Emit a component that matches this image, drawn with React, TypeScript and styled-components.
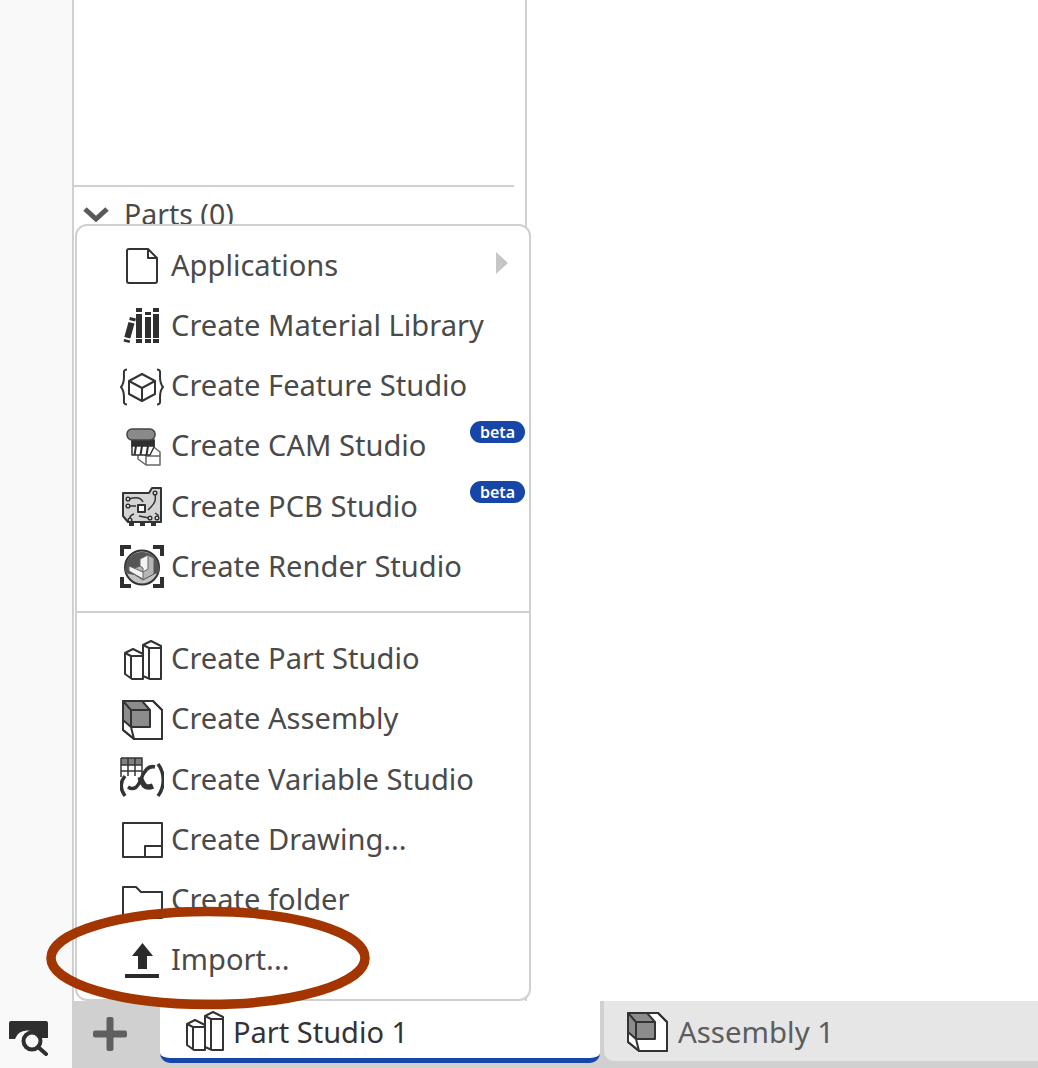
import React from "react";
import styled, { createGlobalStyle } from "styled-components";

const GlobalStyle = createGlobalStyle`
  html, body {
    margin: 0;
    padding: 0;
    background: #fff;
    font-family: "Noto Sans", "Open Sans", sans-serif;
  }
`;

const Page = styled.div`
  position: relative;
  width: 1038px;
  height: 1068px;
  display: flex;
  flex-direction: column;
  overflow: hidden;
`;

const Workspace = styled.div`
  position: relative;
  height: 1001px;
  display: flex;
`;

const Rail = styled.div`
  width: 72px;
  background: #f9f9f9;
`;

const Panel = styled.div`
  width: 451px;
  border-left: 2px solid #d0d0d0;
  border-right: 2px solid #d0d0d0;
  padding-top: 185px;
  background: #fff;
`;

const PanelRule = styled.div`
  height: 2px;
  margin-right: 11px;
  background: #d0d0d0;
`;

const PartsRow = styled.div`
  display: flex;
  align-items: center;
  gap: 15px;
  padding: 8px 0 0 9px;
  font-size: 28.5px;
  line-height: 38px;
  color: #4a4a4a;
`;

const Menu = styled.div`
  position: absolute;
  left: 75px;
  top: 224px;
  width: 456px;
  height: 777px;
  box-sizing: border-box;
  padding-top: 9px;
  background: #fff;
  border: 2px solid #d0d0d0;
  border-radius: 12px;
`;

const MenuRow = styled.div`
  position: relative;
  height: 60.25px;
  display: flex;
  align-items: center;
  padding-left: 43px;
  gap: 7px;
  font-size: 29.1px;
  color: #4a4a4a;
  white-space: nowrap;
`;

const MenuLabel = styled.span`
  margin-bottom: 1px;
`;

const MenuRule = styled.div`
  height: 2px;
  margin: 14px 0 16px;
  background: #d0d0d0;
`;

const Beta = styled.span`
  position: absolute;
  right: 4px;
  top: 5px;
  width: 55px;
  height: 22px;
  border-radius: 11px;
  background: #1546a8;
  color: #fff;
  font-size: 16px;
  font-weight: 600;
  line-height: 22px;
  text-align: center;
`;

const SubArrow = styled.span`
  position: absolute;
  right: 21px;
  top: 17px;
  width: 0;
  height: 0;
  border-left: 12px solid #c6c6c6;
  border-top: 11px solid transparent;
  border-bottom: 11px solid transparent;
`;

const TabBar = styled.div`
  flex: 1;
  display: flex;
  background: #d0d0d0;
`;

const SearchCell = styled.div`
  width: 72px;
  display: flex;
  align-items: center;
  padding: 6px 0 0 8px;
  box-sizing: border-box;
  background: #f9f9f9;
`;

const AddCell = styled.div`
  width: 88px;
  display: flex;
  align-items: center;
  justify-content: center;
  box-sizing: border-box;
  padding: 0 12px 2px 0;
`;

const Tab = styled.div<{ $active?: boolean }>`
  height: ${(p) => (p.$active ? "62px" : "60px")};
  box-sizing: border-box;
  display: flex;
  align-items: center;
  font-size: ${(p) => (p.$active ? "29px" : "29.4px")};
  white-space: nowrap;
  color: ${(p) => (p.$active ? "#333" : "#5d5d5d")};
  background: ${(p) => (p.$active ? "#fff" : "#e6e6e6")};
  width: ${(p) => (p.$active ? "440px" : "434px")};
  margin-left: ${(p) => (p.$active ? "0" : "4px")};
  padding-left: ${(p) => (p.$active ? "22px" : "21px")};
  gap: ${(p) => (p.$active ? "7px" : "9px")};
  border-bottom: ${(p) => (p.$active ? "5px solid #1546a8" : "none")};
  border-radius: ${(p) => (p.$active ? "0 0 10px 10px" : "0 0 0 10px")};
`;

const TabLabel = styled.span<{ $active?: boolean }>`
  margin-top: ${(p) => (p.$active ? "4px" : "1px")};
`;

const Glyph = styled.svg`
  flex: none;
  width: 44px;
  height: 44px;
  fill: none;
  stroke: #333;
  stroke-width: 2;
  stroke-linejoin: round;
`;

const Highlight = styled.svg`
  position: absolute;
  left: 40px;
  top: 900px;
  width: 340px;
  height: 116px;
  pointer-events: none;
`;

const DocIcon = () => (
  <Glyph viewBox="0 0 44 44">
    <path d="M9 6h19l9 9v23a2 2 0 0 1-2 2H9a2 2 0 0 1-2-2V8a2 2 0 0 1 2-2z" />
    <path d="M28 6v9h9" />
  </Glyph>
);

const LibraryIcon = () => (
  <Glyph viewBox="0 0 44 44" style={{ stroke: "none" }}>
    <g fill="#2f2f2f">
      <rect x="16" y="5" width="6" height="4" />
      <rect x="16" y="11" width="6" height="24" />
      <rect x="16" y="36" width="6" height="4" />
      <rect x="25" y="9" width="6" height="3" />
      <rect x="25" y="14" width="6" height="21" />
      <rect x="25" y="36" width="6" height="4" />
      <rect x="33" y="5" width="6" height="4" />
      <rect x="33" y="11" width="6" height="24" />
      <rect x="33" y="36" width="6" height="4" />
      <path d="M10 14l6 1.500-.8 3-6-1.500zM8.500 19l6 1.500-4.200 15-6-1.500zM4.200 36l6 1.500-.7 2.500-6-1.500z" />
    </g>
  </Glyph>
);

const FeatureIcon = () => (
  <Glyph viewBox="0 0 44 44">
    <path d="M22 10l13 7v13l-13 7-13-7V17z" />
    <path d="M9 17l13 7 13-7M22 24v13" />
    <path d="M6 5.500c-4 0-3 3-3 7s0 7-3 10.500c3 3.500 3 6.500 3 10.500s-1 7 3 7" transform="translate(1 0)" />
    <path d="M38 5.500c4 0 3 3 3 7s0 7 3 10.500c-3 3.500-3 6.500-3 10.500s1 7-3 7" transform="translate(-1 0)" />
  </Glyph>
);

const CamIcon = () => (
  <Glyph viewBox="0 0 44 44" style={{ strokeWidth: 1.5 }}>
    <path d="M30 20l10 8v13H26l-8-6v-9l6-3z" stroke="#666" fill="#fff" />
    <path d="M18 26l8 6v9M26 32h14" stroke="#666" />
    <path d="M12 16h22v7l-4 8H12z" fill="#fff" stroke="#333" />
    <path d="M12 16h22v6H12z" fill="#2f2f2f" stroke="#2f2f2f" />
    <path d="M16 22l-1.500 9M22 22l-1.500 9M28 22l-1.500 9" stroke="#2f2f2f" strokeWidth="2" />
    <rect x="7" y="5" width="28" height="11" rx="5" fill="#8a8a8a" stroke="#444" />
  </Glyph>
);

const PcbIcon = () => (
  <Glyph viewBox="0 0 44 44" style={{ strokeWidth: 1.5 }}>
    <path d="M3 9h26l3-5h9v34H8l-5-6z" fill="#d4d4d4" stroke="#333" strokeWidth="2" />
    <path d="M9 38h5v4H9zM20 38h5v4h-5zM31 38h5v4h-5z" fill="#333" stroke="none" />
    <rect x="18" y="21" width="7" height="7" fill="#fff" stroke="#333" strokeWidth="2" />
    <path d="M9 15c6-2 12-2 14 3M9 22h7M35 10c1 6 0 9-4 13l-3 3M14 30c-3 1-5 3-4 6M19 32l10 2M35 29l3 2v3" />
    <circle cx="8" cy="15" r="1.800" fill="#fff" />
    <circle cx="8" cy="22" r="1.800" fill="#fff" />
    <circle cx="35" cy="9" r="1.800" fill="#fff" />
    <circle cx="10" cy="36" r="1.800" fill="#fff" />
    <circle cx="30" cy="34" r="1.800" fill="#fff" />
    <circle cx="37" cy="34" r="1.800" fill="#fff" />
  </Glyph>
);

const RenderIcon = () => (
  <Glyph viewBox="0 0 44 44">
    <g fill="#2f2f2f" stroke="none">
      <path d="M0 1h11v4H4v7H0zM33 1h11v11h-4V5h-7zM0 33h4v7h7v4H0zM40 33h4v11H33v-4h7z" />
    </g>
    <circle cx="22" cy="23.500" r="17" fill="#c4c4c4" stroke="#333" />
    <path d="M5.500 21a17 17 0 0 1 33 0c1 3 .5 6 0 8-8 3-24 3-33 0-.5-2-.5-6 0-8z" fill="#555" stroke="none" />
    <path d="M9 27l8-4 3-1v-7l8-4 6 3v16l-11 6z" fill="#b5b5b5" stroke="#555" strokeWidth="1" />
    <path d="M9 27l14 8v-7l-14-6zM20 22l3 2v4l5-3V11l-8 4z" fill="#f3f3f3" stroke="#666" strokeWidth="1" />
  </Glyph>
);

const PartIcon = () => (
  <Glyph viewBox="0 0 44 44">
    <path d="M5 16l8-4 10 5v25H12l-7-5z" fill="#fff" />
    <path d="M5 16l6 3h12M11 19v23" />
    <path d="M23 8l8-4 10 5v33H30l-7-3z" fill="#fff" />
    <path d="M23 8l6 3h12M29 11v31" />
  </Glyph>
);

const AssemblyIcon = () => (
  <Glyph viewBox="0 0 44 44">
    <path d="M3 4h30l9 9v29H14L3 33z" fill="#fff" />
    <path d="M3 4h19l8 9v17H11l-8-7z" fill="#8c8c8c" stroke="none" />
    <path d="M3 4l8 9h19M22 4l8 9v17H11V13M3 23l8 7M14 42l-3-12" />
    <path d="M3 4h30l9 9v29H14L3 33z" />
  </Glyph>
);

const VariableIcon = () => (
  <Glyph viewBox="0 0 44 44">
    <path d="M1 1h21v7H1z" fill="#808080" stroke="none" />
    <path d="M1 1h21v18M1 1v19M8 1v18M15 1v18M1 8h21M1 14h21" strokeWidth="1.500" />
    <path d="M5 19c-5 6-5 13 0 20" strokeWidth="3.500" />
    <path d="M38 7c7 9 7 23 0 32" strokeWidth="3.500" />
    <path d="M20 20c2 5 4 13 13 9" strokeWidth="5.500" />
    <path d="M35 10c-7-2-11 4-14 12-3 8-7 12-13 8" strokeWidth="3.500" />
  </Glyph>
);

const DrawingIcon = () => (
  <Glyph viewBox="0 0 44 44">
    <path d="M3 6h39v34H3z" />
    <path d="M25 40V29h17" />
  </Glyph>
);

const FolderIcon = () => (
  <Glyph viewBox="0 0 44 44">
    <path d="M3 9h13l5 5h21v26H3z" />
  </Glyph>
);

const ImportIcon = () => (
  <Glyph viewBox="0 0 44 44" style={{ stroke: "none" }}>
    <path d="M22.500 5L33 18h-6v13h-9V18h-6z" fill="#2b2b2b" />
    <rect x="5" y="36" width="34" height="4" fill="#2b2b2b" />
  </Glyph>
);

const ViewSearchIcon = () => (
  <svg width="42" height="36" viewBox="0 0 42 36" fill="none">
    <path d="M1 3a2 2 0 0 1 2-2h35a2 2 0 0 1 2 2v15h-9a13 13 0 0 0-24 1H1z" fill="#2f2f2f" />
    <circle cx="24" cy="21" r="8.500" stroke="#2f2f2f" strokeWidth="4" />
    <path d="M30 27l8 7" stroke="#2f2f2f" strokeWidth="4" strokeLinecap="round" />
  </svg>
);

const PlusIcon = () => (
  <svg width="34" height="34" viewBox="0 0 34 34" fill="#5f5f5f">
    <rect x="13.500" y="0" width="7" height="34" rx="2" />
    <rect x="0" y="13.500" width="34" height="7" rx="2" />
  </svg>
);

const Chevron = () => (
  <svg width="26" height="16" viewBox="0 0 26 16" fill="none">
    <path d="M2 3l11 10L24 3" stroke="#5a5a5a" strokeWidth="5" />
  </svg>
);

const topItems = [
  { label: "Applications", icon: <DocIcon />, sub: true },
  { label: "Create Material Library", icon: <LibraryIcon /> },
  { label: "Create Feature Studio", icon: <FeatureIcon /> },
  { label: "Create CAM Studio", icon: <CamIcon />, beta: true },
  { label: "Create PCB Studio", icon: <PcbIcon />, beta: true },
  { label: "Create Render Studio", icon: <RenderIcon /> },
];

const bottomItems = [
  { label: "Create Part Studio", icon: <PartIcon /> },
  { label: "Create Assembly", icon: <AssemblyIcon /> },
  { label: "Create Variable Studio", icon: <VariableIcon /> },
  { label: "Create Drawing...", icon: <DrawingIcon /> },
  { label: "Create folder", icon: <FolderIcon /> },
  { label: "Import...", icon: <ImportIcon /> },
];

export default function App() {
  return (
    <Page>
      <GlobalStyle />
      <Workspace>
        <Rail />
        <Panel>
          <PanelRule />
          <PartsRow>
            <Chevron />
            Parts (0)
          </PartsRow>
        </Panel>
        <Menu>
          {topItems.map((item) => (
            <MenuRow key={item.label}>
              {item.icon}
              <MenuLabel>{item.label}</MenuLabel>
              {item.sub && <SubArrow />}
              {item.beta && <Beta>beta</Beta>}
            </MenuRow>
          ))}
          <MenuRule />
          {bottomItems.map((item) => (
            <MenuRow key={item.label}>
              {item.icon}
              <MenuLabel>{item.label}</MenuLabel>
            </MenuRow>
          ))}
        </Menu>
      </Workspace>
      <TabBar>
        <SearchCell>
          <ViewSearchIcon />
        </SearchCell>
        <AddCell>
          <PlusIcon />
        </AddCell>
        <Tab $active>
          <PartIcon />
          <TabLabel $active>Part Studio 1</TabLabel>
        </Tab>
        <Tab>
          <AssemblyIcon />
          <TabLabel>Assembly 1</TabLabel>
        </Tab>
      </TabBar>
      <Highlight viewBox="0 0 340 116">
        <ellipse cx="168" cy="58" rx="157" ry="46.500" fill="none" stroke="#a33600" strokeWidth="9.500" />
      </Highlight>
    </Page>
  );
}
